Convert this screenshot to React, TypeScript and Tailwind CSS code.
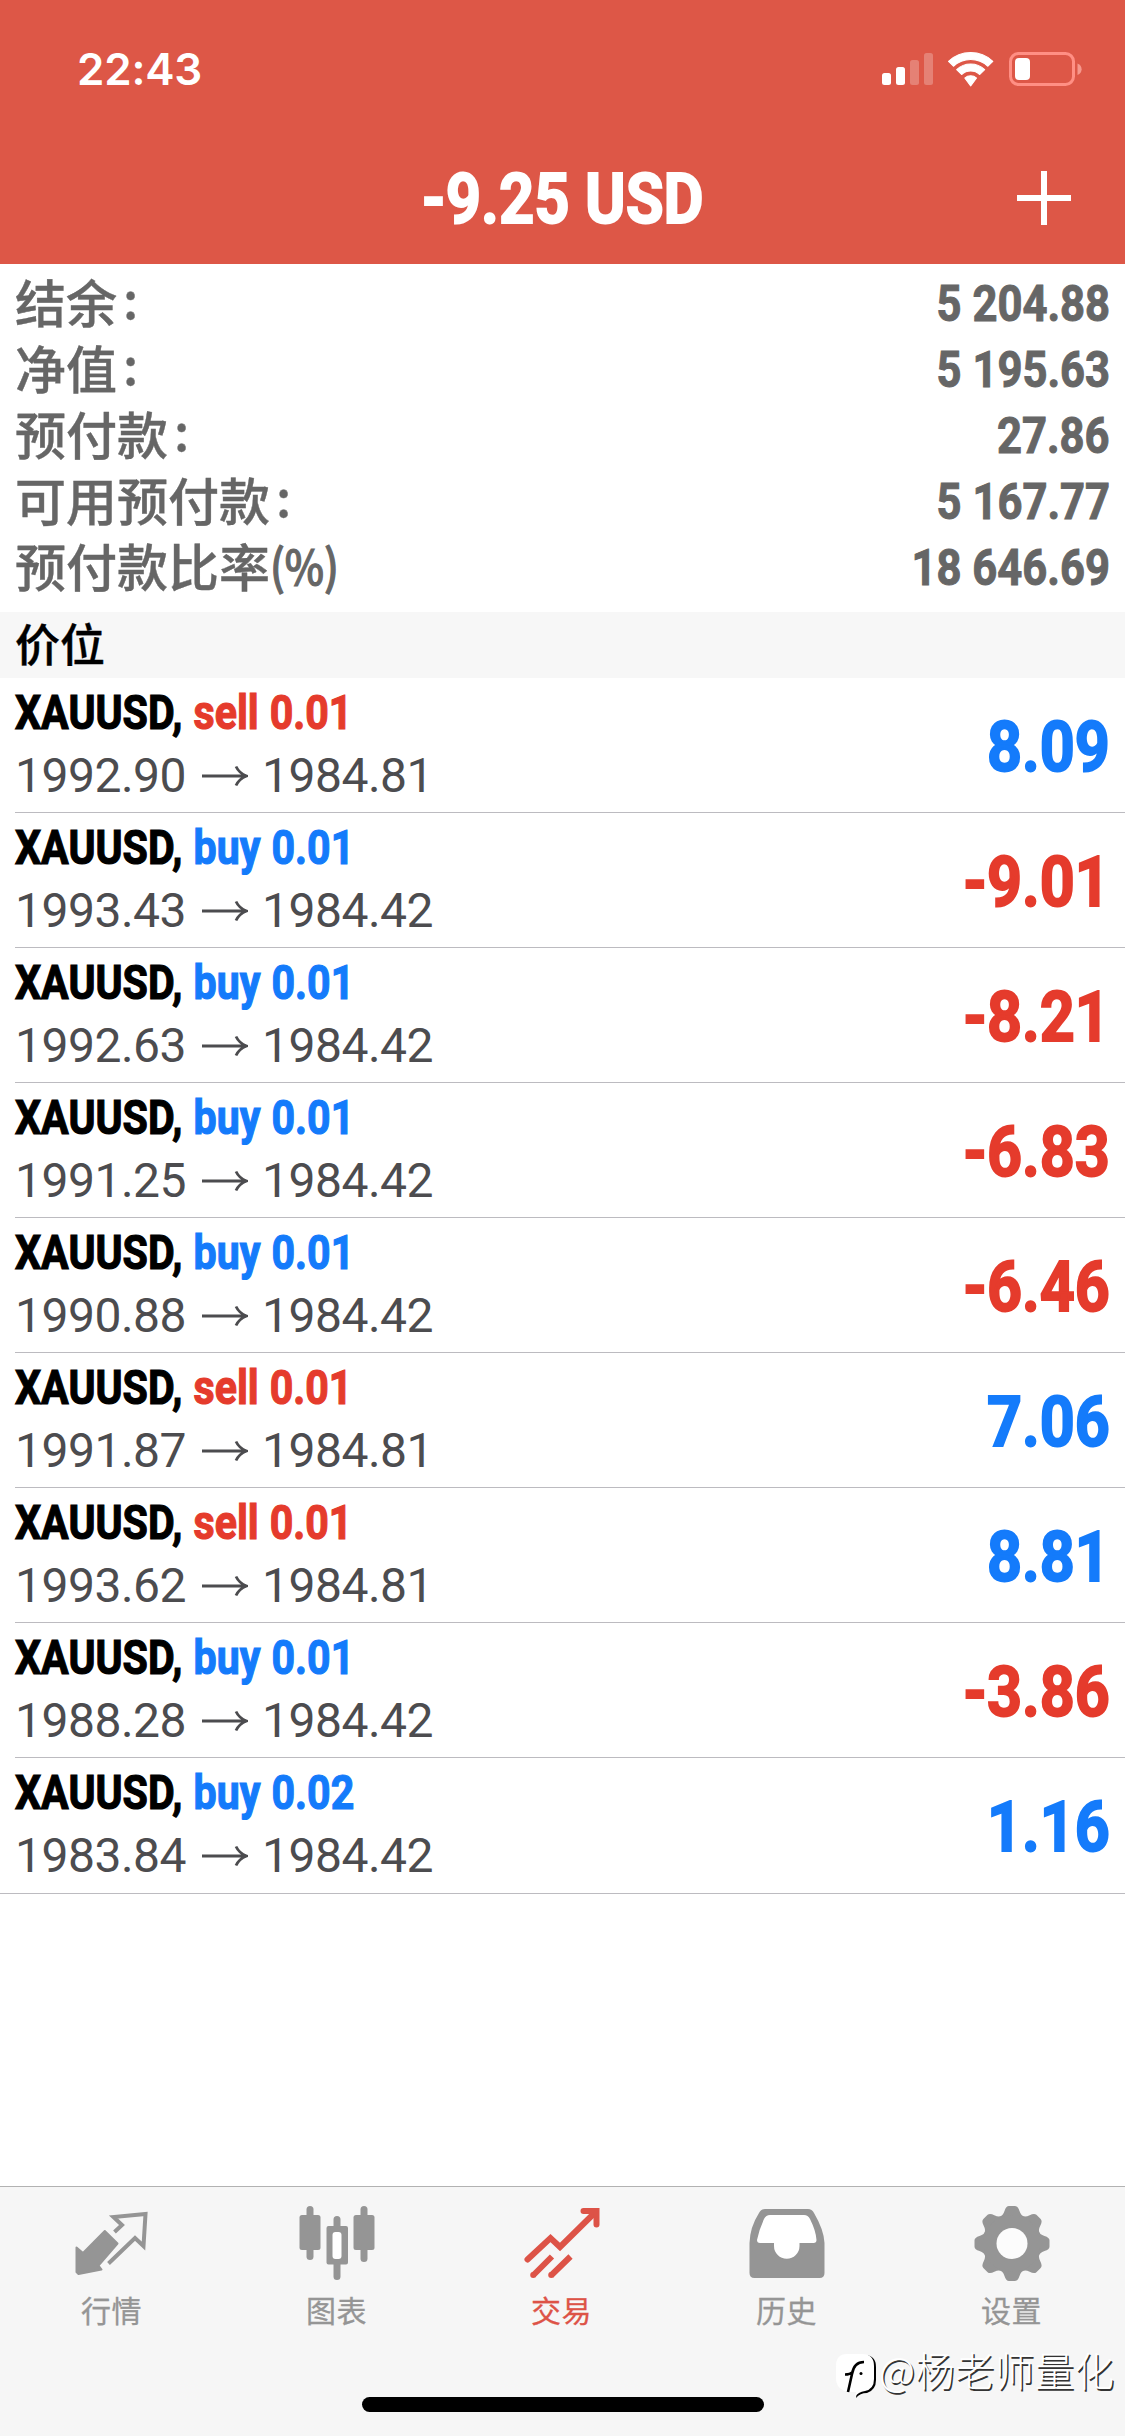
import type { ReactNode } from "react";

type Position = {
  side: "sell" | "buy";
  volume: string;
  open: string;
  current: string;
  profit: string;
};

const summary = [
  { label: "结余", suffix: ":", value: "5 204.88" },
  { label: "净值", suffix: ":", value: "5 195.63" },
  { label: "预付款", suffix: ":", value: "27.86" },
  { label: "可用预付款", suffix: ":", value: "5 167.77" },
  { label: "预付款比率", suffix: "(%)", value: "18 646.69" },
];

const positions: Position[] = [
  { side: "sell", volume: "0.01", open: "1992.90", current: "1984.81", profit: "8.09" },
  { side: "buy", volume: "0.01", open: "1993.43", current: "1984.42", profit: "-9.01" },
  { side: "buy", volume: "0.01", open: "1992.63", current: "1984.42", profit: "-8.21" },
  { side: "buy", volume: "0.01", open: "1991.25", current: "1984.42", profit: "-6.83" },
  { side: "buy", volume: "0.01", open: "1990.88", current: "1984.42", profit: "-6.46" },
  { side: "sell", volume: "0.01", open: "1991.87", current: "1984.81", profit: "7.06" },
  { side: "sell", volume: "0.01", open: "1993.62", current: "1984.81", profit: "8.81" },
  { side: "buy", volume: "0.01", open: "1988.28", current: "1984.42", profit: "-3.86" },
  { side: "buy", volume: "0.02", open: "1983.84", current: "1984.42", profit: "1.16" },
];

function StatusBar() {
  return (
    <div className="flex h-[132px] items-start justify-between pl-[77px] pr-[43px] pt-[47px]">
      <span className="font-['Inter'] text-[44px] font-semibold leading-[44px] tracking-[-0.2px]">
        22:43
      </span>
      <svg width="202" height="44" viewBox="0 0 202 44" fill="#fff">
        <rect x="2" y="26" width="9" height="12" rx="2.5" />
        <rect x="16" y="20" width="9" height="18" rx="2.5" />
        <rect x="30" y="13" width="9" height="25" rx="2.5" opacity="0.25" />
        <rect x="44" y="6" width="9" height="32" rx="2.5" opacity="0.25" />
        <g transform="translate(0.9 -1.3) scale(1.07)" stroke="#fff" strokeLinejoin="round">
          <path d="M63.2 14.6a30.2 30.2 0 0 1 41.4 0l-4.6 4.6a23.6 23.6 0 0 0-32.2 0z" />
          <path d="M70.8 22.3a19.2 19.2 0 0 1 26.2 0l-4.6 4.6a12.6 12.6 0 0 0-17 0z" />
          <path d="M78.4 30.2a8 8 0 0 1 11 0l-5.5 7.4z" />
        </g>
        <rect x="130.5" y="6.5" width="63" height="31" rx="8" fill="none" stroke="#ff8f84" strokeWidth="3" />
        <rect x="135" y="11" width="15" height="22" rx="4" />
        <path d="M197.500 16.500c5.500 2 5.500 9.500 0 11.500z" fill="#f6988d" />
      </svg>
    </div>
  );
}

function Header() {
  return (
    <header className="h-[264px] bg-[#dd5747] text-white">
      <StatusBar />
      <div className="grid h-[132px] grid-cols-[1fr_auto_1fr] items-center">
        <span />
        <h1 className="scale-x-[0.868] whitespace-nowrap font-['Roboto'] text-[71px] font-bold leading-[134px] [-webkit-text-stroke:2px]">
          -9.25 USD
        </h1>
        <svg width="54" height="54" viewBox="0 0 54 54" className="mb-[2px] mr-[54px] justify-self-end">
          <path d="M27 0v54M0 27h54" stroke="#fff" strokeWidth="6" />
        </svg>
      </div>
    </header>
  );
}

function Summary() {
  return (
    <section className="h-[348px] px-[15px] pt-[6px] text-[#666]">
      {summary.map(({ label, suffix, value }) => (
        <div key={label} className="flex h-[66px] justify-between">
          <span className="flex whitespace-nowrap font-['Noto_Sans_CJK_SC'] text-[51px] font-medium leading-[62px] [-webkit-text-stroke:0.4px]">
            {label}
            <span
              className={
                suffix === ":"
                  ? "ml-[6px] leading-[54px]"
                  : "origin-left scale-x-[0.87] text-[48px] leading-[60px] [-webkit-text-stroke:1.2px]"
              }
            >
              {suffix}
            </span>
          </span>
          <span className="origin-right scale-x-[0.863] whitespace-nowrap font-['Roboto'] text-[50.5px] font-bold leading-[67px] [-webkit-text-stroke:1px]">
            {value}
          </span>
        </div>
      ))}
    </section>
  );
}

function PositionRow({ position, last }: { position: Position; last: boolean }) {
  const { side, volume, open, current, profit } = position;
  return (
    <li className={last ? "border-b border-[#bcbbc0]" : "pl-[15px]"}>
      <div
        className={`flex h-[135px] items-start justify-between pr-[15px] ${
          last ? "pl-[15px]" : "border-b border-[#bcbbc0]"
        }`}
      >
        <div className="flex flex-col">
          <div className="h-[69px] origin-left scale-x-[0.848] whitespace-nowrap font-['Roboto'] text-[48.5px] font-bold leading-[69px] text-black [-webkit-text-stroke:1.2px] [word-spacing:1px]">
            XAUUSD,{" "}
            <span className={side === "sell" ? "text-[#e53b2c]" : "text-[#147bfb]"}>
              {side} {volume}
            </span>
          </div>
          <div className="flex h-[58px] items-center font-['Roboto'] text-[48px] leading-[58px] tracking-[-0.5px] text-[#4c4c4f]">
            <span>{open}</span>
            <svg width="46" height="22" viewBox="0 0 46 22" className="ml-4 mr-[14px]">
              <path d="M0 11h44M34 1.500q3 6.500 10.500 9.500-7.500 3-10.500 9.500" fill="none" stroke="currentColor" strokeWidth="2.8" />
            </svg>
            <span>{current}</span>
          </div>
        </div>
        <span
          className={`h-[134px] origin-right scale-x-[0.86] whitespace-nowrap font-['Roboto'] text-[71px] font-bold leading-[138px] [-webkit-text-stroke:2px] ${
            profit.startsWith("-") ? "text-[#e53b2c]" : "text-[#147bfb]"
          }`}
        >
          {profit}
        </span>
      </div>
    </li>
  );
}

function QuotesIcon() {
  return (
    <svg width="76" height="76" viewBox="0 0 76 76">
      <path d="M30.800 25L43.500 37.500 24.500 59.500 27.500 63.500 4.500 68 2.500 66V41.500L9 47z" fill="currentColor" stroke="currentColor" strokeWidth="2" strokeLinejoin="round" />
      <path d="M40.500 26L48 19 39.500 11 71.500 8 69.500 40 61 32 34.500 57.500" fill="none" stroke="currentColor" strokeWidth="4" />
    </svg>
  );
}

function ChartIcon() {
  return (
    <svg width="76" height="76" viewBox="0 0 76 76" fill="currentColor">
      <rect x="7.500" y="0" width="7" height="54" rx="3.500" />
      <rect x="0.500" y="9" width="21" height="35" rx="2.500" />
      <rect x="61.500" y="0" width="7" height="56" rx="3.500" />
      <rect x="54.500" y="9" width="21" height="35" rx="2.500" />
      <path d="M34.500 20v-6.500a3.500 3.500 0 0 1 7 0V20h5.500q2 0 2 2v34.500q0 2-2 2H41.500v12a3.500 3.500 0 0 1-7 0v-12h-5q-2 0-2-2V22q0-2 2-2z" />
      <rect x="33.500" y="26" width="9" height="27" rx="3" fill="#fff" />
    </svg>
  );
}

function TradeIcon() {
  return (
    <svg width="76" height="76" viewBox="0 0 76 76" fill="none" stroke="currentColor">
      <path d="M3.500 53.500L26.500 32 36 41 71.500 6" strokeWidth="6" strokeLinecap="round" />
      <path d="M59.500 5h13v13.500" strokeWidth="6" strokeLinecap="round" />
      <path d="M9 69.500L28 50.500M27 69.500L46.500 50.500" strokeWidth="6" />
      <path d="M9.200 69h.01M27.200 69h.01" strokeWidth="6" strokeLinecap="round" />
    </svg>
  );
}

function HistoryIcon() {
  return (
    <svg width="76" height="76" viewBox="0 0 76 76">
      <path d="M16 3h43q4 0 6 4 10 17 10.500 30v30q0 5-5 5H5.500q-5 0-5-5V37Q1 21 10 7q2-4 6-4z" fill="currentColor" />
      <path d="M21 9h34q4 0 6 4 6 12 6.500 21 0 3-3 3H50.500v3a12.700 12.700 0 0 1-25.500 0v-3H11q-3 0-3-3 2-10 7-21 2-4 6-4z" fill="#fff" />
    </svg>
  );
}

const TEETH = [0, 45, 90, 135, 180, 225, 270, 315];

function SettingsIcon() {
  return (
    <svg width="76" height="76" viewBox="0 0 76 76" fill="currentColor">
      {TEETH.map((angle) => (
        <path
          key={angle}
          transform={`rotate(${angle} 38 37.500)`}
          d="M25 11q4-1 5.500-6Q32 0 35 0h6q3 0 4.500 5 1.500 5 5.500 6l-5 12H30z"
        />
      ))}
      <circle cx="38" cy="37.500" r="28.500" />
      <circle cx="38" cy="37.500" r="15.500" fill="#fcfcfc" />
    </svg>
  );
}

function Tab({ icon, label, active }: { icon: ReactNode; label: string; active?: boolean }) {
  return (
    <div
      className={`flex w-[225px] flex-col items-center pr-[2px] pt-[19px] ${
        active ? "text-[#dd5347]" : "text-[#959595]"
      }`}
    >
      {icon}
      <span className="mt-[5px] font-['Noto_Sans_CJK_SC'] text-[30px] leading-[44px] tracking-[0.5px] [-webkit-text-stroke:0.3px]">
        {label}
      </span>
    </div>
  );
}

function Watermark() {
  return (
    <div className="absolute left-[834px] top-[2350px] flex items-start">
      <svg width="45" height="50" viewBox="0 0 45 50">
        <path d="M14 5h16q12 0 12 12v13q0 10-9 13-7 0-11 5l1-8z" fill="#000" />
        <path d="M13 4h15q12 0 12 12v13q0 10-9 12-7 1-10 6l1-5h-7Q2 40 2 28V16Q2 4 13 4z" fill="#fff" />
        <path d="M14 42l4-18q2-12 12-12M11 24.500q5 0 8-2.500" fill="none" stroke="#000" strokeWidth="2.600" />
        <circle cx="27" cy="23.500" r="1.500" />
      </svg>
      <span className="whitespace-nowrap font-['Noto_Sans_CJK_SC'] text-[39.500px] font-light leading-[37px] tracking-[0.3px] text-white [text-shadow:1.5px_1.5px_0_#333]">
        @杨老师量化
      </span>
    </div>
  );
}

export default function App() {
  return (
    <div className="relative flex h-[2436px] w-[1125px] flex-col overflow-hidden bg-white">
      <Header />
      <Summary />
      <h2 className="h-[66px] bg-[#f7f7f7] pl-[15px] font-['Noto_Sans_CJK_SC'] text-[45px] font-medium leading-[61px] text-black [-webkit-text-stroke:0.4px]">
        价位
      </h2>
      <ul>
        {positions.map((position, index) => (
          <PositionRow key={index} position={position} last={index === positions.length - 1} />
        ))}
      </ul>
      <nav className="mt-auto h-[250px] border-t border-[#b2b2b2] bg-[#f6f6f6]">
        <div className="flex h-[210px]">
          <Tab icon={<QuotesIcon />} label="行情" />
          <Tab icon={<ChartIcon />} label="图表" />
          <Tab icon={<TradeIcon />} label="交易" active />
          <Tab icon={<HistoryIcon />} label="历史" />
          <Tab icon={<SettingsIcon />} label="设置" />
        </div>
        <div className="mx-auto h-[15px] w-[402px] rounded-full bg-black" />
      </nav>
      <Watermark />
    </div>
  );
}
